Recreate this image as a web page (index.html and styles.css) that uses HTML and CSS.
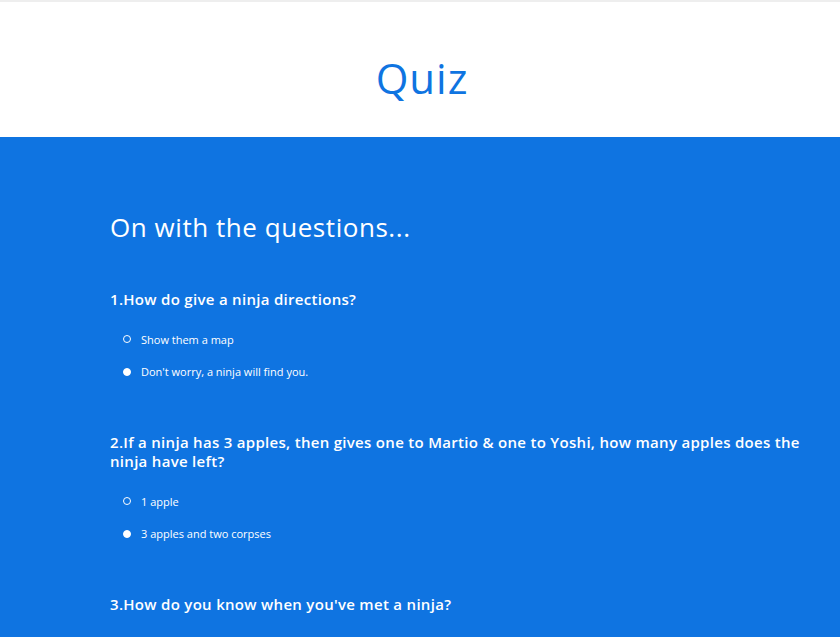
FILE: index.html
```html
<!DOCTYPE html>
<html lang="en">
<head>
<meta charset="utf-8">
<title>Quiz</title>
<link rel="stylesheet" href="styles.css">
</head>
<body>
<div class="topbar"></div>
<header class="header">
  <h1 class="title">Quiz</h1>
</header>
<main class="quiz">
  <h2 class="intro">On with the questions...</h2>
  <section class="question">
    <p class="q-text">1.How do give a ninja directions?</p>
    <label class="option"><input type="radio" name="q1"><span>Show them a map</span></label>
    <label class="option"><input type="radio" name="q1" checked><span>Don't worry, a ninja will find you.</span></label>
  </section>
  <section class="question">
    <p class="q-text">2.If a ninja has 3 apples, then gives one to Martio &amp; one to Yoshi, how many apples does the ninja have left?</p>
    <label class="option"><input type="radio" name="q2"><span>1 apple</span></label>
    <label class="option"><input type="radio" name="q2" checked><span>3 apples and two corpses</span></label>
  </section>
  <section class="question">
    <p class="q-text">3.How do you know when you've met a ninja?</p>
    <label class="option"><input type="radio" name="q3"><span>You'll recognize the outfit</span></label>
    <label class="option"><input type="radio" name="q3" checked><span>The grim reaper will tell you</span></label>
  </section>
</main>
</body>
</html>
```

FILE: styles.css
```css
* { box-sizing: border-box; }
html, body { margin: 0; padding: 0; }
body {
  font-family: "Open Sans", "Noto Sans", sans-serif;
  background: #0f74e1;
}
.topbar {
  height: 2px;
  background: #eeeeee;
}
.header {
  background: #ffffff;
  height: 135px;
  display: flex;
  align-items: center;
  justify-content: center;
}
.title {
  margin: 0;
  font-weight: 400;
  font-size: 42px;
  letter-spacing: 1px;
  color: #0f74e1;
  padding-top: 16px;
  padding-left: 4px;
}
.quiz {
  background: #0f74e1;
  color: #ffffff;
  padding: 70px 20px 40px 110px;
}
.intro {
  margin: 0 0 43px;
  font-weight: 400;
  font-size: 26px;
  line-height: 40px;
  letter-spacing: 0.55px;
}
.question {
  margin-bottom: 45px;
}
.q-text {
  margin: 0 0 14px;
  font-size: 15px;
  font-weight: 600;
  line-height: 19px;
  letter-spacing: 0.3px;
}
.option {
  display: flex;
  align-items: center;
  height: 32px;
  padding-left: 13px;
  font-size: 11px;
  font-weight: 500;
}
.option + .option {
  height: 33px;
}
.option input {
  appearance: none;
  -webkit-appearance: none;
  width: 8px;
  height: 8px;
  margin: 0 10px 0 0;
  border: 1.5px solid #ffffff;
  border-radius: 50%;
  background: transparent;
}
.option input:checked {
  background: #ffffff;
}
```
